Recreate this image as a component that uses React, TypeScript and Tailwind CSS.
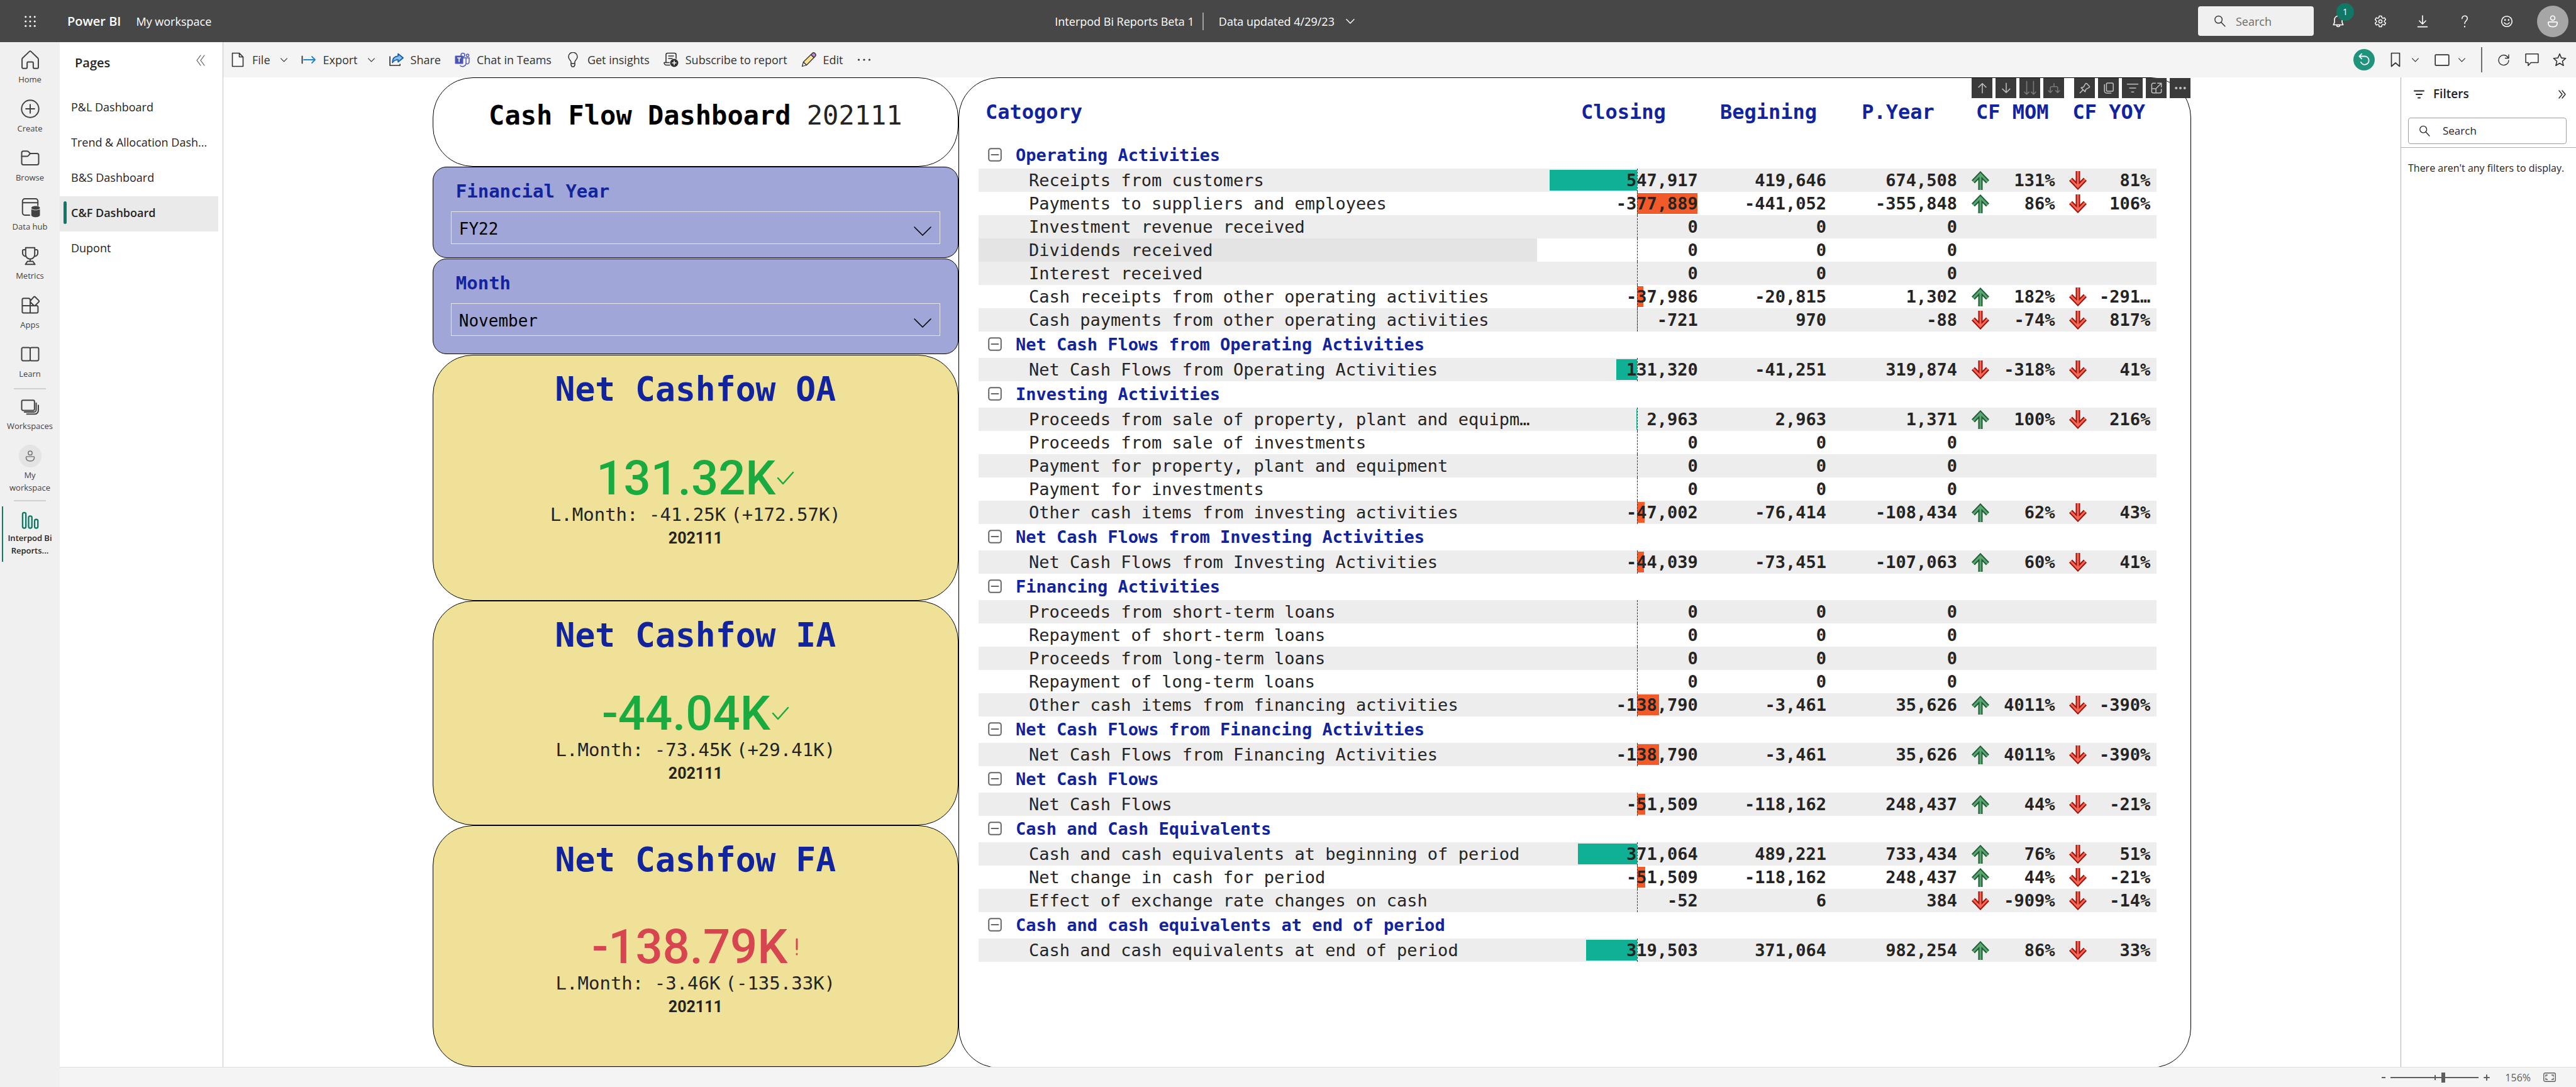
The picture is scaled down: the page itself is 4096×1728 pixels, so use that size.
import React from "react";

type SvgProps = { className?: string; children: React.ReactNode; box?: string; sw?: number };

function Svg({ className = "size-9", children, box = "0 0 20 20", sw = 1.1 }: SvgProps) {
  return (
    <svg
      viewBox={box}
      className={className}
      fill="none"
      stroke="currentColor"
      strokeWidth={sw}
      strokeLinecap="round"
      strokeLinejoin="round"
      aria-hidden="true"
    >
      {children}
    </svg>
  );
}

const Chevron = ({ className = "w-[11px] h-[7px]" }: { className?: string }) => (
  <Svg className={className} box="0 0 12 7" sw={1.2}>
    <path d="M.7.7 6 6.2 11.3.7" />
  </Svg>
);

const SearchIcon = ({ className = "size-[19px]" }: { className?: string }) => (
  <Svg className={className} sw={1.5}>
    <circle cx="8" cy="7.5" r="6" />
    <path d="m12.4 12 6.4 6.8" />
  </Svg>
);

const PersonGlyph = () => (
  <>
    <circle cx="10" cy="5.6" r="2.9" />
    <path d="M5 10.8h10a1 1 0 0 1 1 1c0 3.4-2.4 5.4-6 5.4s-6-2-6-5.4a1 1 0 0 1 1-1Z" />
  </>
);

/* ---------- Header ---------- */

function Header() {
  return (
    <header className="flex h-[67px] shrink-0 items-center bg-[#474747] text-lg text-white">
      <button aria-label="App launcher" className="ml-[35px] flex size-[26px] items-center justify-center">
        <svg viewBox="0 0 20 20" className="size-[18px]" fill="currentColor" aria-hidden="true">
          {[2, 10, 18].map((y) => [2, 10, 18].map((x) => <circle key={`${x}-${y}`} cx={x} cy={y} r="1.7" />))}
        </svg>
      </button>
      <a href="#home" className="ml-[46px] text-xl font-semibold">Power BI</a>
      <a href="#workspace" className="ml-6">My workspace</a>
      <div className="flex flex-1 items-center justify-center">
        <span>Interpod Bi Reports Beta 1</span>
        <span className="ml-[13px] mr-6 h-7 w-0.5 bg-[#a0a0a0]" />
        <button className="flex items-center gap-[18px]">
          Data updated 4/29/23
          <Chevron className="h-2 w-3.5" />
        </button>
      </div>
      <label className="flex h-[47px] w-[184px] items-center gap-4 rounded-sm bg-[#f0f0f0] pl-[25px] text-[#333]">
        <SearchIcon />
        <input aria-label="Search" placeholder="Search" className="w-24 bg-transparent outline-none placeholder:text-[#6b6b6b]" />
      </label>
      <div className="ml-[5px] flex items-center">
        <button aria-label="Notifications" className="relative flex w-[67px] justify-center">
          <Svg className="size-[22px]" sw={1.5}>
            <path d="M10 2a5.5 5.5 0 0 0-5.5 5.5v4L3 15h14l-1.5-3.500v-4A5.500 5.500 0 0 0 10 2ZM7.800 15.500a2.200 2.200 0 0 0 4.400 0" />
          </Svg>
          <span className="absolute -top-[18px] left-[31px] flex size-7 items-center justify-center rounded-full bg-[#117865] text-sm">1</span>
        </button>
        <button aria-label="Settings" className="flex w-[67px] justify-center">
          <Svg className="size-5" sw={1.5}>
            <path d="M8.200 1.500h3.600l.6 2.700 1.500.9 2.700-.9 1.800 3.100-2.100 1.900v1.600l2.100 1.900-1.800 3.100-2.700-.9-1.500.9-.6 2.700H8.200l-.6-2.700-1.500-.9-2.700.9-1.800-3.100 2.100-1.900V9.200L1.600 7.300l1.800-3.100 2.700.9 1.500-.9Z" />
            <circle cx="10" cy="10" r="2.600" />
          </Svg>
        </button>
        <button aria-label="Download" className="flex w-[67px] justify-center">
          <Svg className="size-5" sw={1.6}>
            <path d="M10 1v13M4.800 9l5.200 5.200L15.200 9M2.500 18.600h15" />
          </Svg>
        </button>
        <button aria-label="Help" className="flex w-[67px] justify-center">
          <Svg className="size-5" sw={1.6}>
            <path d="M5.800 5.600A4.200 4.200 0 0 1 10 1.300c2.400 0 4.200 1.700 4.200 4.100 0 3.300-4.200 4-4.200 8" />
            <path d="M10 18v.4" strokeWidth="2.200" />
          </Svg>
        </button>
        <button aria-label="Feedback" className="flex w-[67px] justify-center">
          <Svg className="size-5" sw={1.6}>
            <circle cx="10" cy="10" r="8.300" />
            <path d="M6 12.200c1.800 3 6.200 3 8 0" />
            <path d="M7.200 7.500v.4M12.800 7.500v.4" strokeWidth="2.400" />
          </Svg>
        </button>
        <button aria-label="Account" className="ml-[15px] mr-3 flex size-[50px] items-center justify-center rounded-full bg-[#a6a6a6]">
          <Svg className="size-6" sw={1.4}><PersonGlyph /></Svg>
        </button>
      </div>
    </header>
  );
}

/* ---------- Navigation rail ---------- */

const navItems: { label: string; icon: React.ReactNode }[] = [
  { label: "Home", icon: <path d="M9.300 2.700a1 1 0 0 1 1.400 0l6 5.800c.4.300.5.700.5 1.200v7a.9.900 0 0 1-.9.900h-2.700a.9.900 0 0 1-.9-.9v-3.900a.8.800 0 0 0-.8-.8H8.100a.8.800 0 0 0-.8.800v3.900a.9.900 0 0 1-.9.900H3.700a.9.900 0 0 1-.9-.9v-7c0-.5.200-.9.500-1.200Z" /> },
  { label: "Create", icon: <><circle cx="10" cy="10" r="7.600" /><path d="M10 6.200v7.600M6.200 10h7.600" /></> },
  { label: "Browse", icon: <><path d="M2.500 5.500A1.500 1.500 0 0 1 4 4h3.200c.4 0 .8.200 1.100.4L10 6.100h6A1.500 1.500 0 0 1 17.500 7.600v7A1.500 1.500 0 0 1 16 16.100H4a1.500 1.500 0 0 1-1.500-1.500Z" /><path d="M2.500 8.600h4.700c.4 0 .8-.2 1.100-.5l1.800-2" /></> },
  { label: "Data hub", icon: <><path d="M9.500 17.200H5.200A2 2 0 0 1 3.200 15.200V4.800a2 2 0 0 1 2-2h9.600a2 2 0 0 1 2 2v4M3.200 6.200h13.600" /><path d="M11 12v5.200c0 1 1.700 1.800 3.800 1.800s3.800-.8 3.800-1.800V12c-2 1.300-5.600 1.300-7.600 0Z" fill="currentColor" stroke="none" /><ellipse cx="14.800" cy="10.800" rx="3.800" ry="1.700" fill="currentColor" stroke="none" /></> },
  { label: "Metrics", icon: <path d="M6 2.700h8v6a4 4 0 0 1-8 0ZM6 4.500H4.300a1 1 0 0 0-1 1v2a2.800 2.800 0 0 0 2.900 2.800M14 4.500h1.700a1 1 0 0 1 1 1v2a2.800 2.800 0 0 1-2.900 2.800M10 12.700v2M7.600 14.700h4.800l1.800 2.700H5.800Z" /> },
  { label: "Apps", icon: <path d="M4.300 4h4.200A1.500 1.500 0 0 1 10 5.500V17H4.300A1.300 1.300 0 0 1 3 15.700V5.300A1.300 1.300 0 0 1 4.300 4ZM3 10.500h12.600A1.300 1.300 0 0 1 16.900 11.800v3.900A1.300 1.300 0 0 1 15.600 17H10M13.100 2.900a1 1 0 0 1 1.400 0l3 3a1 1 0 0 1 0 1.400l-3 3a1 1 0 0 1-1.400 0l-2.800-2.800a1 1 0 0 1 0-1.400Z" /> },
  { label: "Learn", icon: <path d="M10 5v10.500M10 5a1.300 1.300 0 0 0-1.200-.8H3.700a1.200 1.200 0 0 0-1.200 1.200v9.200a1.200 1.200 0 0 0 1.200 1.200h5.100a1.300 1.300 0 0 0 1.200-.6 1.300 1.300 0 0 0 1.200.6h5.100a1.200 1.200 0 0 0 1.200-1.200V5.400a1.200 1.200 0 0 0-1.200-1.200h-5.100A1.300 1.300 0 0 0 10 5Z" /> },
];

function NavRail() {
  return (
    <nav className="w-[95px] shrink-0 bg-[#f0f0f0] text-[13px] leading-5 text-[#424242]">
      {navItems.map((n) => (
        <a key={n.label} href="#nav" className="flex h-[78px] flex-col items-center gap-[3px] pt-2.5">
          <Svg>{n.icon}</Svg>
          <span>{n.label}</span>
        </a>
      ))}
      <hr className="mx-[22px] mt-1 border-t-2 border-[#d1d1d1]" />
      <a href="#workspaces" className="flex h-[78px] flex-col items-center gap-0.5 pt-2.5">
        <Svg>
          <rect x="2.500" y="4" width="11.300" height="9" rx="1.200" />
          <path d="M15.300 6.500v6a2 2 0 0 1-2 2H4.900M17.200 8.500v4.300a3.300 3.300 0 0 1-3.300 3.500H7" />
        </Svg>
        <span>Workspaces</span>
      </a>
      <a href="#my-workspace" className="flex h-[98px] flex-col items-center gap-0.5 pt-2.5 text-center">
        <span className="flex size-9 items-center justify-center rounded-full bg-[#e4e4e4] text-[#707070]">
          <Svg className="size-[22px]" sw={1.300}><PersonGlyph /></Svg>
        </span>
        <span>My<br />workspace</span>
      </a>
      <hr className="mx-[22px] mb-2 border-t-2 border-[#d1d1d1]" />
      <a href="#report" className="ml-[3px] flex h-[88px] flex-col items-center border-l-2 border-[#117865] pr-[5px] pt-1 text-center font-semibold text-[#242424]">
        <Svg className="size-9 text-[#117865]" sw={1.300}>
          <rect x="3.300" y="3.300" width="2.900" height="13.700" rx="1.400" />
          <rect x="8.600" y="6.300" width="2.900" height="10.700" rx="1.400" />
          <rect x="13.900" y="9.300" width="2.900" height="7.700" rx="1.400" />
        </Svg>
        <span className="whitespace-nowrap">Interpod Bi<br />Reports...</span>
      </a>
    </nav>
  );
}

/* ---------- Pages pane ---------- */

const pages = ["P&L Dashboard", "Trend & Allocation Dash...", "B&S Dashboard", "C&F Dashboard", "Dupont"];

function PagesPane() {
  return (
    <aside className="w-[260px] shrink-0 border-r border-[#c8c6c4] bg-white text-[#252423]">
      <div className="flex h-[77px] items-center justify-between pl-6 pr-7">
        <h2 className="pb-3 text-xl font-semibold">Pages</h2>
        <button aria-label="Collapse pages" className="pb-5 text-[#555]">
          <Svg className="h-[18px] w-[14px]" box="0 0 14 18" sw={1.200}>
            <path d="M7 1 1 9l6 8M13 1 7 9l6 8" />
          </Svg>
        </button>
      </div>
      <ul className="mr-[7px]">
        {pages.map((p) =>
          p === "C&F Dashboard" ? (
            <li key={p}>
              <a href="#page" aria-current="page" className="flex h-14 items-center bg-[#eaeaea] pb-1 pl-1.5 text-lg font-semibold">
                <span className="mr-[7px] h-9 w-[5px] rounded-full bg-[#117865]" />
                {p}
              </a>
            </li>
          ) : (
            <li key={p}>
              <a href="#page" className="flex h-14 items-center whitespace-nowrap pb-1 pl-[18px] text-lg">{p}</a>
            </li>
          ),
        )}
      </ul>
    </aside>
  );
}

/* ---------- Report toolbar ---------- */

function Tool({ icon, label, menu }: { icon: React.ReactNode; label: string; menu?: boolean }) {
  return (
    <button className="flex items-center gap-[11px]">
      {icon}
      {label}
      {menu && <span className="ml-[5px]"><Chevron /></span>}
    </button>
  );
}

function ReportToolbar() {
  return (
    <div className="flex h-14 shrink-0 items-center gap-[22px] bg-[#f4f4f4] pl-[11px] pr-[15px] text-lg text-[#323130]">
      <Tool menu label="File" icon={
        <Svg className="size-6" box="0 0 24 24" sw={1.600}><path d="M3.500 1.500h11l6 6v15h-17ZM14.500 1.500v6h6" fill="#fafafa" /></Svg>
      } />
      <Tool menu label="Export" icon={
        <Svg className="size-6" box="0 0 24 24" sw={1.800}><path d="M1.500 6.500v11" /><path d="M4 12h18M17 7l5 5-5 5" stroke="#1a86d0" /></Svg>
      } />
      <Tool label="Share" icon={
        <Svg className="size-6" box="0 0 24 24" sw={1.700}>
          <path d="M2 7v14h16v-2" />
          <path d="M15 2.500 23 9l-8 6.500V12c-4 0-6.500 1-9 4.500C6 10 9.500 6.500 15 6Z" fill="#83beec" stroke="#0f5ea8" />
        </Svg>
      } />
      <Tool label="Chat in Teams" icon={
        <svg viewBox="0 0 24 24" className="size-6" aria-hidden="true">
          <circle cx="13" cy="4.500" r="3" fill="none" stroke="#5059c9" strokeWidth="1.500" />
          <circle cx="20.500" cy="5" r="2" fill="none" stroke="#5059c9" strokeWidth="1.500" />
          <path d="M12 9h6v8a5.500 5.500 0 0 1-9.500 4M18.500 9H23v6.500a3 3 0 0 1-4.500 2.700" fill="none" stroke="#5059c9" strokeWidth="1.500" />
          <rect x=".5" y="5.500" width="13" height="13" rx="1" fill="#4b53bc" />
          <path d="M4 9h6M7 9v6.500" stroke="#fff" strokeWidth="1.700" />
        </svg>
      } />
      <Tool label="Get insights" icon={
        <Svg className="size-6" box="0 0 24 24" sw={1.500}>
          <path d="M9 18v-2.500c0-2.500-4-3.500-4-8.300a7 7 0 0 1 14 0c0 4.800-4 5.800-4 8.300V18ZM9 18v2.500L10.500 23h3l1.500-2.500V18" />
        </Svg>
      } />
      <Tool label="Subscribe to report" icon={
        <Svg className="size-6" box="0 0 24 24" sw={1.600}>
          <path d="M10 20.500H5a4 4 0 0 1-4-4h3V4a2.500 2.500 0 0 1 2.500-2.500h11A2.500 2.500 0 0 1 20 4v6M4 16.500h5M8 6h8M8 10h6" />
          <circle cx="17" cy="17" r="6.500" fill="#323130" stroke="none" />
          <path d="M17 14v6M14 17h6" stroke="#fff" />
        </Svg>
      } />
      <Tool label="Edit" icon={
        <Svg className="size-6" box="0 0 24 24" sw={1.300}>
          <path d="M1.500 22.500 3.500 15.500 8.500 20.500Z" fill="#fff" />
          <path d="M3.500 15.500 15.500 3.800 20.300 8.500 8.500 20.500Z" fill="#fce08f" />
          <path d="M15.500 3.800 17.300 2a3.300 3.300 0 0 1 4.800 4.700l-1.800 1.800Z" fill="#c586d9" />
        </Svg>
      } />
      <button aria-label="More options">
        <svg viewBox="0 0 22 6" className="h-1.5 w-[22px]" fill="currentColor" aria-hidden="true">
          <circle cx="2.500" cy="3" r="1.600" /><circle cx="11" cy="3" r="1.600" /><circle cx="19.500" cy="3" r="1.600" />
        </svg>
      </button>
      <div className="ml-auto flex items-center">
        <button aria-label="Reset to default" className="mr-[25px] flex size-[34px] items-center justify-center rounded-full bg-[#20937e] text-white">
          <Svg className="size-[22px]" sw={1.600}><path d="M3 5h8a6 6 0 1 1-5.500 8.500M6.500 1.500 3 5l3.500 3.500" /></Svg>
        </button>
        <button aria-label="Bookmarks" className="mr-[25px] flex items-center gap-[18px]">
          <Svg className="h-6 w-4" box="0 0 16 24" sw={1.700}><path d="M1.500 1.500h13v21L8 17l-6.500 5.500Z" /></Svg>
          <Chevron />
        </button>
        <button aria-label="View" className="mr-[25px] flex items-center gap-3.5">
          <Svg className="h-[19px] w-6" box="0 0 24 19" sw={1.700}><rect x="1.200" y="1.200" width="21.600" height="16.600" rx="1" fill="#fafafa" /></Svg>
          <Chevron />
        </button>
        <span className="mr-6 h-10 w-0.5 bg-[#6e6e6e]" />
        <button aria-label="Refresh" className="mr-6">
          <Svg className="size-5" sw={1.400}><path d="M18 2v5.500h-5.500M17.300 7.300A8 8 0 1 0 18 11" /></Svg>
        </button>
        <button aria-label="Comment" className="mr-[22px]">
          <Svg className="size-[22px]" sw={1.400}><path d="M1 1.500h18v12.500H8.500L4.500 18.500V14H1Z" fill="#fafafa" /></Svg>
        </button>
        <button aria-label="Favorite">
          <Svg className="size-[22px]" sw={1.400}><path d="m10 1.500 2.500 5.900 6.300.5-4.800 4.200 1.500 6.300L10 15l-5.500 3.400L6 12.100 1.200 7.900l6.300-.5Z" /></Svg>
        </button>
      </div>
    </div>
  );
}

/* ---------- Left column of the report ---------- */

function Slicer({ id, label, value }: { id: string; label: string; value: string }) {
  return (
    <div className="mb-px rounded-[22px] border border-black bg-[#a0a6d8] px-7 pt-[18px]">
      <label htmlFor={id} className="block pl-2 text-[29px] font-bold leading-10 text-[#12239e]">{label}</label>
      <div className="relative mt-3">
        <select id={id} className="h-[52px] w-full appearance-none border border-[#e6e6e6] bg-transparent pl-3 pt-1 text-[26px] text-black">
          <option>{value}</option>
        </select>
        <span className="pointer-events-none absolute right-3.5 top-6 text-black">
          <Svg className="h-[15px] w-7" box="0 0 28 15" sw={1.600}><path d="m1 1 13 13L27 1" /></Svg>
        </span>
      </div>
    </div>
  );
}

type Kpi = { title: string; value: string; prev: string; delta: string; good: boolean };

const kpis: Kpi[] = [
  { title: "Net Cashfow OA", value: "131.32K", prev: "-41.25K", delta: "(+172.57K)", good: true },
  { title: "Net Cashfow IA", value: "-44.04K", prev: "-73.45K", delta: "(+29.41K)", good: true },
  { title: "Net Cashfow FA", value: "-138.79K", prev: "-3.46K", delta: "(-135.33K)", good: false },
];

function KpiCard({ k }: { k: Kpi }) {
  return (
    <section className="flex flex-col rounded-[64px] border border-black bg-[#efe198] text-center text-[#252423]">
      <h3 className="pt-[30px] text-[53px] font-bold leading-[48px] text-[#12239e]">{k.title}</h3>
      <div className="flex flex-1 flex-col items-center justify-center">
        <p className={k.good ? "flex items-center gap-0.5 text-[#1aab40]" : "flex items-center gap-3 text-[#d64550]"}>
          <span className="font-[Roboto] text-[76px] font-medium leading-[80px]">{k.value}</span>
          {k.good ? (
            <Svg className="h-[22px] w-7" box="0 0 28 22" sw={2.500}><path d="m2 11 8 9L26 2" /></Svg>
          ) : (
            <Svg className="h-7 w-1.5" box="0 0 6 28" sw={3}><path d="M3 2v16M3 25.500v.4" /></Svg>
          )}
        </p>
        <p className="flex gap-2 text-[29px] leading-9">
          <span>L.Month: {k.prev}</span>
          <span>{k.delta}</span>
        </p>
        <p className="font-[Roboto] text-[25px] font-bold leading-10">202111</p>
      </div>
    </section>
  );
}

/* ---------- Cash flow table ---------- */

type Item = {
  name: string;
  closing: number;
  begin: string;
  year: string;
  mom?: string;
  momUp?: boolean;
  yoy?: string;
  hovered?: boolean;
};

const zero = (name: string, hovered = false): Item => ({ name, closing: 0, begin: "0", year: "0", hovered });

const groups: { title: string; items: Item[] }[] = [
  {
    title: "Operating Activities",
    items: [
      { name: "Receipts from customers", closing: 547917, begin: "419,646", year: "674,508", mom: "131%", momUp: true, yoy: "81%" },
      { name: "Payments to suppliers and employees", closing: -377889, begin: "-441,052", year: "-355,848", mom: "86%", momUp: true, yoy: "106%" },
      zero("Investment revenue received"),
      zero("Dividends received", true),
      zero("Interest received"),
      { name: "Cash receipts from other operating activities", closing: -37986, begin: "-20,815", year: "1,302", mom: "182%", momUp: true, yoy: "-291…" },
      { name: "Cash payments from other operating activities", closing: -721, begin: "970", year: "-88", mom: "-74%", momUp: false, yoy: "817%" },
    ],
  },
  {
    title: "Net Cash Flows from Operating Activities",
    items: [{ name: "Net Cash Flows from Operating Activities", closing: 131320, begin: "-41,251", year: "319,874", mom: "-318%", momUp: false, yoy: "41%" }],
  },
  {
    title: "Investing Activities",
    items: [
      { name: "Proceeds from sale of property, plant and equipm…", closing: 2963, begin: "2,963", year: "1,371", mom: "100%", momUp: true, yoy: "216%" },
      zero("Proceeds from sale of investments"),
      zero("Payment for property, plant and equipment"),
      zero("Payment for investments"),
      { name: "Other cash items from investing activities", closing: -47002, begin: "-76,414", year: "-108,434", mom: "62%", momUp: true, yoy: "43%" },
    ],
  },
  {
    title: "Net Cash Flows from Investing Activities",
    items: [{ name: "Net Cash Flows from Investing Activities", closing: -44039, begin: "-73,451", year: "-107,063", mom: "60%", momUp: true, yoy: "41%" }],
  },
  {
    title: "Financing Activities",
    items: [
      zero("Proceeds from short-term loans"),
      zero("Repayment of short-term loans"),
      zero("Proceeds from long-term loans"),
      zero("Repayment of long-term loans"),
      { name: "Other cash items from financing activities", closing: -138790, begin: "-3,461", year: "35,626", mom: "4011%", momUp: true, yoy: "-390%" },
    ],
  },
  {
    title: "Net Cash Flows from Financing Activities",
    items: [{ name: "Net Cash Flows from Financing Activities", closing: -138790, begin: "-3,461", year: "35,626", mom: "4011%", momUp: true, yoy: "-390%" }],
  },
  {
    title: "Net Cash Flows",
    items: [{ name: "Net Cash Flows", closing: -51509, begin: "-118,162", year: "248,437", mom: "44%", momUp: true, yoy: "-21%" }],
  },
  {
    title: "Cash and Cash Equivalents",
    items: [
      { name: "Cash and cash equivalents at beginning of period", closing: 371064, begin: "489,221", year: "733,434", mom: "76%", momUp: true, yoy: "51%" },
      { name: "Net change in cash for period", closing: -51509, begin: "-118,162", year: "248,437", mom: "44%", momUp: true, yoy: "-21%" },
      { name: "Effect of exchange rate changes on cash", closing: -52, begin: "6", year: "384", mom: "-909%", momUp: false, yoy: "-14%" },
    ],
  },
  {
    title: "Cash and cash equivalents at end of period",
    items: [{ name: "Cash and cash equivalents at end of period", closing: 319503, begin: "371,064", year: "982,254", mom: "86%", momUp: true, yoy: "33%" }],
  },
];

const MAX = 547917;
const SPAN = 547917 + 377889;
const AXIS = (MAX / SPAN) * 100;

function DataBar({ value }: { value: number }) {
  const width = (Math.abs(value) / SPAN) * 100;
  const left = value > 0 ? AXIS - width : AXIS;
  return (
    <span className="absolute inset-y-0 left-5 right-[11px]">
      {width > 0.02 && (
        <span
          className={value > 0 ? "absolute inset-y-[2px] bg-[#10b094]" : "absolute inset-y-[2px] bg-[#f25a2a]"}
          style={{ left: `${left}%`, width: `${width}%` }}
        />
      )}
      <span className="absolute inset-y-0 border-l border-dashed border-[#333]" style={{ left: `${AXIS}%` }} />
    </span>
  );
}

function TrendArrow({ up }: { up: boolean }) {
  const d = up ? "M14 30V5M2.500 17 14 5 25.500 17" : "M14 0v25M2.500 13 14 25 25.500 13";
  return (
    <svg viewBox="0 0 28 30" className="h-[30px] w-7 shrink-0" fill="none" role="img" aria-label={up ? "up" : "down"}>
      <path d={d} stroke={up ? "#215d36" : "#a01208"} strokeWidth="7" />
      <path d={d} stroke={up ? "#5aa871" : "#f4685a"} strokeWidth="3" />
    </svg>
  );
}

function TrendCell({ up, text }: { up: boolean; text?: string }) {
  return (
    <td className="p-0">
      {text && (
        <div className="flex items-center justify-between pl-[13px] pr-2.5">
          <TrendArrow up={up} />
          {text}
        </div>
      )}
    </td>
  );
}

const visualButtons: { label: string; dim?: boolean; gap?: boolean; icon: React.ReactNode }[] = [
  { label: "Drill up", icon: <path d="M10 18.500V2M3.500 8.500 10 2l6.500 6.500" /> },
  { label: "Drill down", icon: <path d="M10 1.500V18M3.500 11.500 10 18l6.500-6.500" /> },
  { label: "Next level", dim: true, icon: <path d="M4 -2v23M0 17l4 4 4-4M16 -2v23M12 17l4 4 4-4" /> },
  { label: "Expand all", dim: true, icon: <path d="M10 2v5M3.500 18V9.500a2 2 0 0 1 2-2h9a2 2 0 0 1 2 2V18M0 14.500 3.500 18 7 14.500M13 14.500l3.500 3.500 3.500-3.500" /> },
  { label: "Pin visual", gap: true, icon: <path d="m1.500 18.500 5.500-5.500M3.500 9.500l7 7 1.500-4.500 5.500-3a1.500 1.500 0 0 0 .4-2.400l-4.500-4.500a1.500 1.500 0 0 0-2.400.4L8 8Z" /> },
  { label: "Copy visual", icon: <><rect x="6" y="1" width="12" height="14.500" rx="2" /><path d="M2.500 4v11a4 4 0 0 0 4 4H14" /></> },
  { label: "Filters", icon: <path d="M.5 3h19M4.500 10h11M8 17h4" /> },
  { label: "Focus mode", icon: <><path d="M8 1.500H4A2.500 2.500 0 0 0 1.500 4v12A2.500 2.500 0 0 0 4 18.500h12a2.500 2.500 0 0 0 2.500-2.500v-4M12 1.500h6.500V8M18 2l-8 8M1.500 11H9v7.500" /></> },
  { label: "More", icon: <g fill="currentColor" stroke="none"><circle cx="2.500" cy="10" r="2.300" /><circle cx="10" cy="10" r="2.300" /><circle cx="17.500" cy="10" r="2.300" /></g> },
];

function CashFlowTable() {
  return (
    <section className="relative -mb-0.5 min-w-0 flex-1 rounded-[64px] border border-black bg-white pl-[31px] pr-[54px]">
      <table className="w-full table-fixed border-collapse text-[27px] leading-[37px] text-[#252423]">
        <colgroup>
          <col className="w-[47.4%]" />
          <col className="w-[14.2%]" />
          <col className="w-[10.9%]" />
          <col className="w-[11.1%]" />
          <col className="w-[8.3%]" />
          <col className="w-[8.1%]" />
        </colgroup>
        <thead>
          <tr className="h-[102px] whitespace-nowrap align-top text-[32px] leading-[48px] text-[#12239e]">
            <th className="pl-[11px] pt-[30px] text-left font-bold">Catogory</th>
            <th className="p-0 pl-5 pr-[11px] pt-[30px] text-center font-bold">Closing</th>
            {["Begining", "P.Year", "CF MOM", "CF YOY"].map((h) => (
              <th key={h} className="p-0 pt-[30px] text-center font-bold">{h}</th>
            ))}
          </tr>
        </thead>
        {groups.map((g) => (
          <tbody key={g.title}>
            <tr className="h-[42px]">
              <th colSpan={6} className="p-0 pb-0.5 text-left font-bold text-[#12239e]">
                <div className="flex items-center gap-[22px] pl-[15px]">
                  <button aria-label={`Collapse ${g.title}`} className="text-[#666]">
                    <Svg className="size-[22px]" box="0 0 22 22" sw={2}>
                      <rect x="1.200" y="1.200" width="19.600" height="19.600" rx="3.500" />
                      <path d="M5.500 11h11" />
                    </Svg>
                  </button>
                  {g.title}
                </div>
              </th>
            </tr>
            {g.items.map((it, i) => (
              <tr key={it.name} className={i % 2 === 0 ? "h-[37px] bg-[#ededed] font-bold" : "h-[37px] font-bold"}>
                <td className={it.hovered ? "truncate bg-[#e4e4e4] p-0 pl-20 font-normal" : "truncate p-0 pl-20 font-normal"}>{it.name}</td>
                <td className="relative p-0 pr-2.5 text-right">
                  <DataBar value={it.closing} />
                  <span className="relative">{it.closing.toLocaleString("en-US")}</span>
                </td>
                <td className="p-0 pr-2.5 text-right">{it.begin}</td>
                <td className="p-0 pr-2.5 text-right">{it.year}</td>
                <TrendCell up={!!it.momUp} text={it.mom} />
                <TrendCell up={false} text={it.yoy} />
              </tr>
            ))}
          </tbody>
        ))}
      </table>
      <div className="absolute right-0 top-0 flex gap-[5px]">
        {visualButtons.map((b) => (
          <React.Fragment key={b.label}>
            {b.gap && <span className="w-1.5" />}
            <button
              aria-label={b.label}
              className={b.dim
                ? "flex h-8 w-[33px] items-center justify-center bg-[#3a3a3a] text-[#7b7b7b]"
                : "flex h-8 w-[33px] items-center justify-center bg-[#3a3a3a] text-[#c0c0c0]"}
            >
              <Svg className="size-[18px] overflow-visible" sw={1.700}>{b.icon}</Svg>
            </button>
          </React.Fragment>
        ))}
      </div>
    </section>
  );
}

function ReportCanvas() {
  return (
    <div className="flex aspect-video h-full font-['DejaVu_Sans_Mono',monospace]">
      <div className="grid w-[29.9%] shrink-0 grid-rows-[142fr_146fr_153fr_390fr_357fr_384fr]">
        <h1 className="rounded-[64px] border border-black bg-white pt-9 text-center text-[42px] leading-[48px] text-[#252423]">
          <strong className="text-black">Cash Flow Dashboard</strong> 202111
        </h1>
        <Slicer id="fy" label="Financial Year" value="FY22" />
        <Slicer id="month" label="Month" value="November" />
        {kpis.map((k) => <KpiCard key={k.title} k={k} />)}
      </div>
      <CashFlowTable />
    </div>
  );
}

/* ---------- Filters pane ---------- */

function FiltersPane() {
  return (
    <aside className="w-[279px] shrink-0 border-l border-[#b3b0ad] bg-white text-[#252423]">
      <div className="flex h-[53px] items-center pl-5 pr-4">
        <Svg className="h-[14px] w-[17px]" box="0 0 17 14" sw={2}><path d="M1 1.500h15M4 7h9M7 12.500h3" /></Svg>
        <h2 className="ml-3.5 text-[19px] font-semibold">Filters</h2>
        <button aria-label="Collapse filters" className="ml-auto">
          <Svg className="h-3.5 w-3" box="0 0 12 14" sw={1.400}><path d="m1 1 5 6-5 6M6 1l5 6-5 6" /></Svg>
        </button>
      </div>
      <div className="border-b border-[#b3b0ad] px-[11px] pb-[5px] pt-[11px]">
        <label className="mr-1 flex h-[42px] items-center gap-5 rounded-sm border border-[#a0a0a0] pl-4">
          <SearchIcon className="size-[18px]" />
          <input aria-label="Search filters" placeholder="Search" className="w-40 text-[17px] outline-none placeholder:text-[#252423]" />
        </label>
      </div>
      <p className="whitespace-nowrap pl-[11px] pt-5 text-base">There aren't any filters to display.</p>
    </aside>
  );
}

/* ---------- Status bar ---------- */

function StatusBar() {
  return (
    <footer className="flex h-8 shrink-0 items-center justify-end border-t border-[#e1dfdd] bg-[#f4f4f4] pr-8 text-[#605e5c]">
      <button aria-label="Zoom out" className="mr-2 h-0.5 w-1.5 bg-current" />
      <div className="relative flex w-[140px] items-center">
        <input
          type="range"
          aria-label="Zoom"
          defaultValue={60}
          className="h-4 w-full appearance-none bg-transparent [&::-webkit-slider-runnable-track]:h-0.5 [&::-webkit-slider-runnable-track]:bg-[#605e5c] [&::-webkit-slider-thumb]:-mt-[7px] [&::-webkit-slider-thumb]:h-4 [&::-webkit-slider-thumb]:w-1.5 [&::-webkit-slider-thumb]:appearance-none [&::-webkit-slider-thumb]:bg-[#605e5c]"
        />
        <span className="absolute left-1/2 h-2 w-0.5 bg-[#605e5c]" />
      </div>
      <button aria-label="Zoom in" className="ml-2">
        <Svg className="size-2.5" box="0 0 10 10" sw={2}><path d="M5 1v8M1 5h8" /></Svg>
      </button>
      <span className="ml-6 text-base">156%</span>
      <button aria-label="Fit to page" className="ml-5">
        <Svg className="h-[15px] w-5" box="0 0 20 15" sw={1.400}>
          <rect x=".8" y=".8" width="18.400" height="13.400" rx="2" />
          <path d="M4 6V4h2.500M13.500 4H16v2M16 9v2h-2.500M6.500 11H4V9" />
        </Svg>
      </button>
    </footer>
  );
}

export default function App() {
  return (
    <div className="flex h-screen flex-col overflow-hidden bg-white font-['Open_Sans',sans-serif]">
      <Header />
      <div className="flex min-h-0 flex-1">
        <NavRail />
        <div className="flex min-w-0 flex-1 flex-col">
          <div className="flex min-h-0 flex-1">
            <PagesPane />
            <div className="flex min-w-0 flex-1 flex-col">
              <ReportToolbar />
              <div className="flex min-h-0 flex-1">
                <main className="flex min-w-0 flex-1 justify-center overflow-hidden">
                  <ReportCanvas />
                </main>
                <FiltersPane />
              </div>
            </div>
          </div>
          <StatusBar />
        </div>
      </div>
    </div>
  );
}
